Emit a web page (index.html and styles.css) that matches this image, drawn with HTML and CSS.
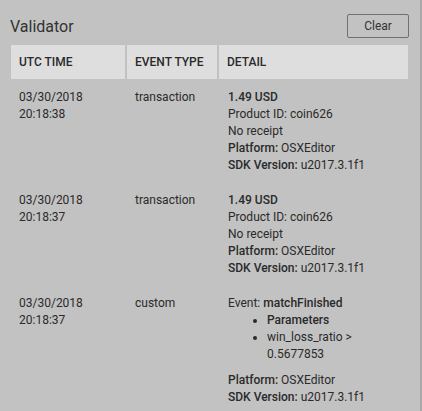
FILE: index.html
```html
<!DOCTYPE html>
<html>
<head>
<meta charset="utf-8">
<link rel="stylesheet" href="styles.css">
</head>
<body>
<div class="panel">
  <div class="topbar">
    <div class="title">Validator</div>
    <button class="clear">Clear</button>
  </div>
  <div class="grid">
    <div class="th">UTC TIME</div>
    <div class="th">EVENT TYPE</div>
    <div class="th">DETAIL</div>

    <div class="td">03/30/2018<br>20:18:38</div>
    <div class="td">transaction</div>
    <div class="td"><b>1.49 USD</b><br>Product ID: coin626<br>No receipt<br><b>Platform:</b> OSXEditor<br><b>SDK Version:</b> u2017.3.1f1</div>

    <div class="td">03/30/2018<br>20:18:37</div>
    <div class="td">transaction</div>
    <div class="td"><b>1.49 USD</b><br>Product ID: coin626<br>No receipt<br><b>Platform:</b> OSXEditor<br><b>SDK Version:</b> u2017.3.1f1</div>

    <div class="td">03/30/2018<br>20:18:37</div>
    <div class="td">custom</div>
    <div class="td">Event: <b>matchFinished</b>
      <ul class="params">
        <li><b>Parameters</b></li>
        <li>win_loss_ratio &gt; 0.5677853</li>
      </ul>
      <b>Platform:</b> OSXEditor<br><b>SDK Version:</b> u2017.3.1f1</div>
  </div>
</div>
</body>
</html>
```
FILE: styles.css
```css
html, body {
  margin: 0;
  padding: 0;
  background: #c2c2c2;
}
body {
  font-family: Roboto, "Liberation Sans", sans-serif;
  color: #2a2a2a;
  overflow: hidden;
}
.panel {
  width: 420px;
  height: 411px;
  box-sizing: border-box;
  border-right: 2px solid #a9a9a9;
  padding: 14px 12px 0 11px;
  box-sizing: content-box;
  width: 397px;
}
.topbar {
  display: flex;
  align-items: center;
  justify-content: space-between;
  height: 24px;
  margin-bottom: 7px;
}
.title {
  font-size: 16px;
  margin-left: -1px;
  color: #333;
}
.clear {
  width: 62px;
  height: 24px;
  background: transparent;
  border: 1px solid #707070;
  border-radius: 2px;
  font-family: Roboto, "Liberation Sans", sans-serif;
  font-size: 12px;
  color: #333;
  padding: 0;
  margin-right: -1px;
}
.grid {
  display: grid;
  grid-template-columns: 114px 90px 1fr;
  column-gap: 2px;
  font-size: 12px;
  line-height: 17px;
}
.th {
  background: #dedede;
  height: 34px;
  display: flex;
  align-items: center;
  padding-left: 8px;
  font-weight: 500;
  color: #2a2a2a;
}
.td {
  padding: 10px 0 8px 8px;
}
.td:nth-child(3n) {
  padding-left: 9px;
}
b {
  font-weight: 500;
}
.params {
  margin: 0 0 9px 0;
  padding-left: 39px;
}
```
